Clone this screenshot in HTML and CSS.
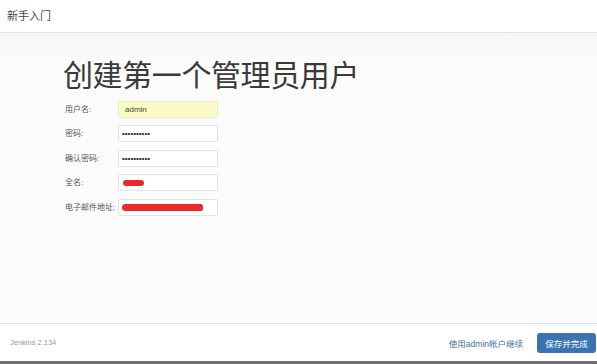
FILE: index.html
```html
<!DOCTYPE html>
<html lang="zh">
<head>
<meta charset="utf-8">
<title>新手入门</title>
<link rel="stylesheet" href="styles.css">
</head>
<body>
<div class="page">
  <header class="header">新手入门</header>
  <main class="main">
    <h1 class="title">创建第一个管理员用户</h1>
    <div class="form">
      <label class="label">用户名:</label>
      <div class="input input-filled">admin</div>
      <label class="label">密码:</label>
      <div class="input dots">••••••••••</div>
      <label class="label">确认密码:</label>
      <div class="input dots">••••••••••</div>
      <label class="label">全名:</label>
      <div class="input"><span class="blot blot-short"></span></div>
      <label class="label">电子邮件地址:</label>
      <div class="input"><span class="blot blot-long"></span></div>
    </div>
  </main>
  <footer class="footer">
    <span class="version">Jenkins 2.134</span>
    <div class="actions">
      <a class="link">使用admin帐户继续</a>
      <button class="btn">保存并完成</button>
    </div>
  </footer>
  <div class="strip"></div>
</div>
</body>
</html>
```

FILE: styles.css
```css
* { box-sizing: border-box; }
html, body { margin: 0; padding: 0; }
body {
  width: 597px;
  height: 364px;
  overflow: hidden;
  font-family: "Liberation Sans", "Noto Sans CJK SC", sans-serif;
  color: #333;
  background: #fff;
}
.page {
  display: flex;
  flex-direction: column;
  height: 364px;
}
.header {
  height: 33px;
  flex: none;
  border-bottom: 1px solid #e3e3e3;
  padding-left: 7px;
  font-size: 11px;
  line-height: 32px;
  color: #444;
  background: #fff;
}
.main {
  flex: 1;
  padding: 20px 0 0 63px;
  background: linear-gradient(#f6f6f6 0px, #fbfbfb 30px, #fcfcfc 100%);
}
.title {
  margin: 0;
  font-family: "Noto Sans CJK SC", sans-serif;
  font-weight: 400;
  font-size: 30px;
  line-height: 40px;
  color: #3a3a3a;
  letter-spacing: -0.4px;
}
.form {
  margin-top: 8px;
  margin-left: 2px;
  display: grid;
  grid-template-columns: 53px 100px;
  grid-auto-rows: 17px;
  row-gap: 7.4px;
  align-items: center;
}
.label {
  font-size: 8px;
  color: #555;
  margin-top: -2px;
  white-space: nowrap;
}
.input {
  height: 17px;
  border: 1px solid #e2e2e2;
  border-radius: 2px;
  background: #fff;
  display: flex;
  align-items: center;
  padding-left: 4px;
  font-size: 8px;
  color: #444;
}
.input-filled {
  background: #fbfbc6;
  border-color: #ecedc8;
  padding-left: 6px;
}
.dots {
  font-size: 8px;
  letter-spacing: 0;
  color: #222;
  padding-left: 3px;
}
.blot {
  display: inline-block;
  background: #ec2a2c;
  border-radius: 4px;
}
.blot-short {
  width: 21px;
  height: 6px;
  margin-left: 0;
  margin-top: 1px;
}
.blot-long {
  width: 81px;
  height: 7px;
  margin-left: -1px;
  border-radius: 4px 3px 3px 4px;
}
.footer {
  height: 38px;
  flex: none;
  border-top: 1px solid #e3e3e3;
  background: #fff;
  display: flex;
  align-items: center;
  justify-content: space-between;
  padding: 0 1px 0 10px;
}
.version {
  font-size: 7.5px;
  color: #9a9a9a;
}
.actions {
  display: flex;
  align-items: center;
  gap: 14px;
}
.link {
  font-size: 8.5px;
  color: #3d6fa8;
  text-decoration: none;
}
.btn {
  height: 20px;
  width: 59px;
  border: 0;
  border-radius: 3px;
  background: #3a74b0;
  color: #fff;
  font-family: "Noto Sans CJK SC", sans-serif;
  font-size: 8.5px;
  padding: 0;
}
.strip {
  height: 3px;
  flex: none;
  background: #6f6f6f;
}
```
